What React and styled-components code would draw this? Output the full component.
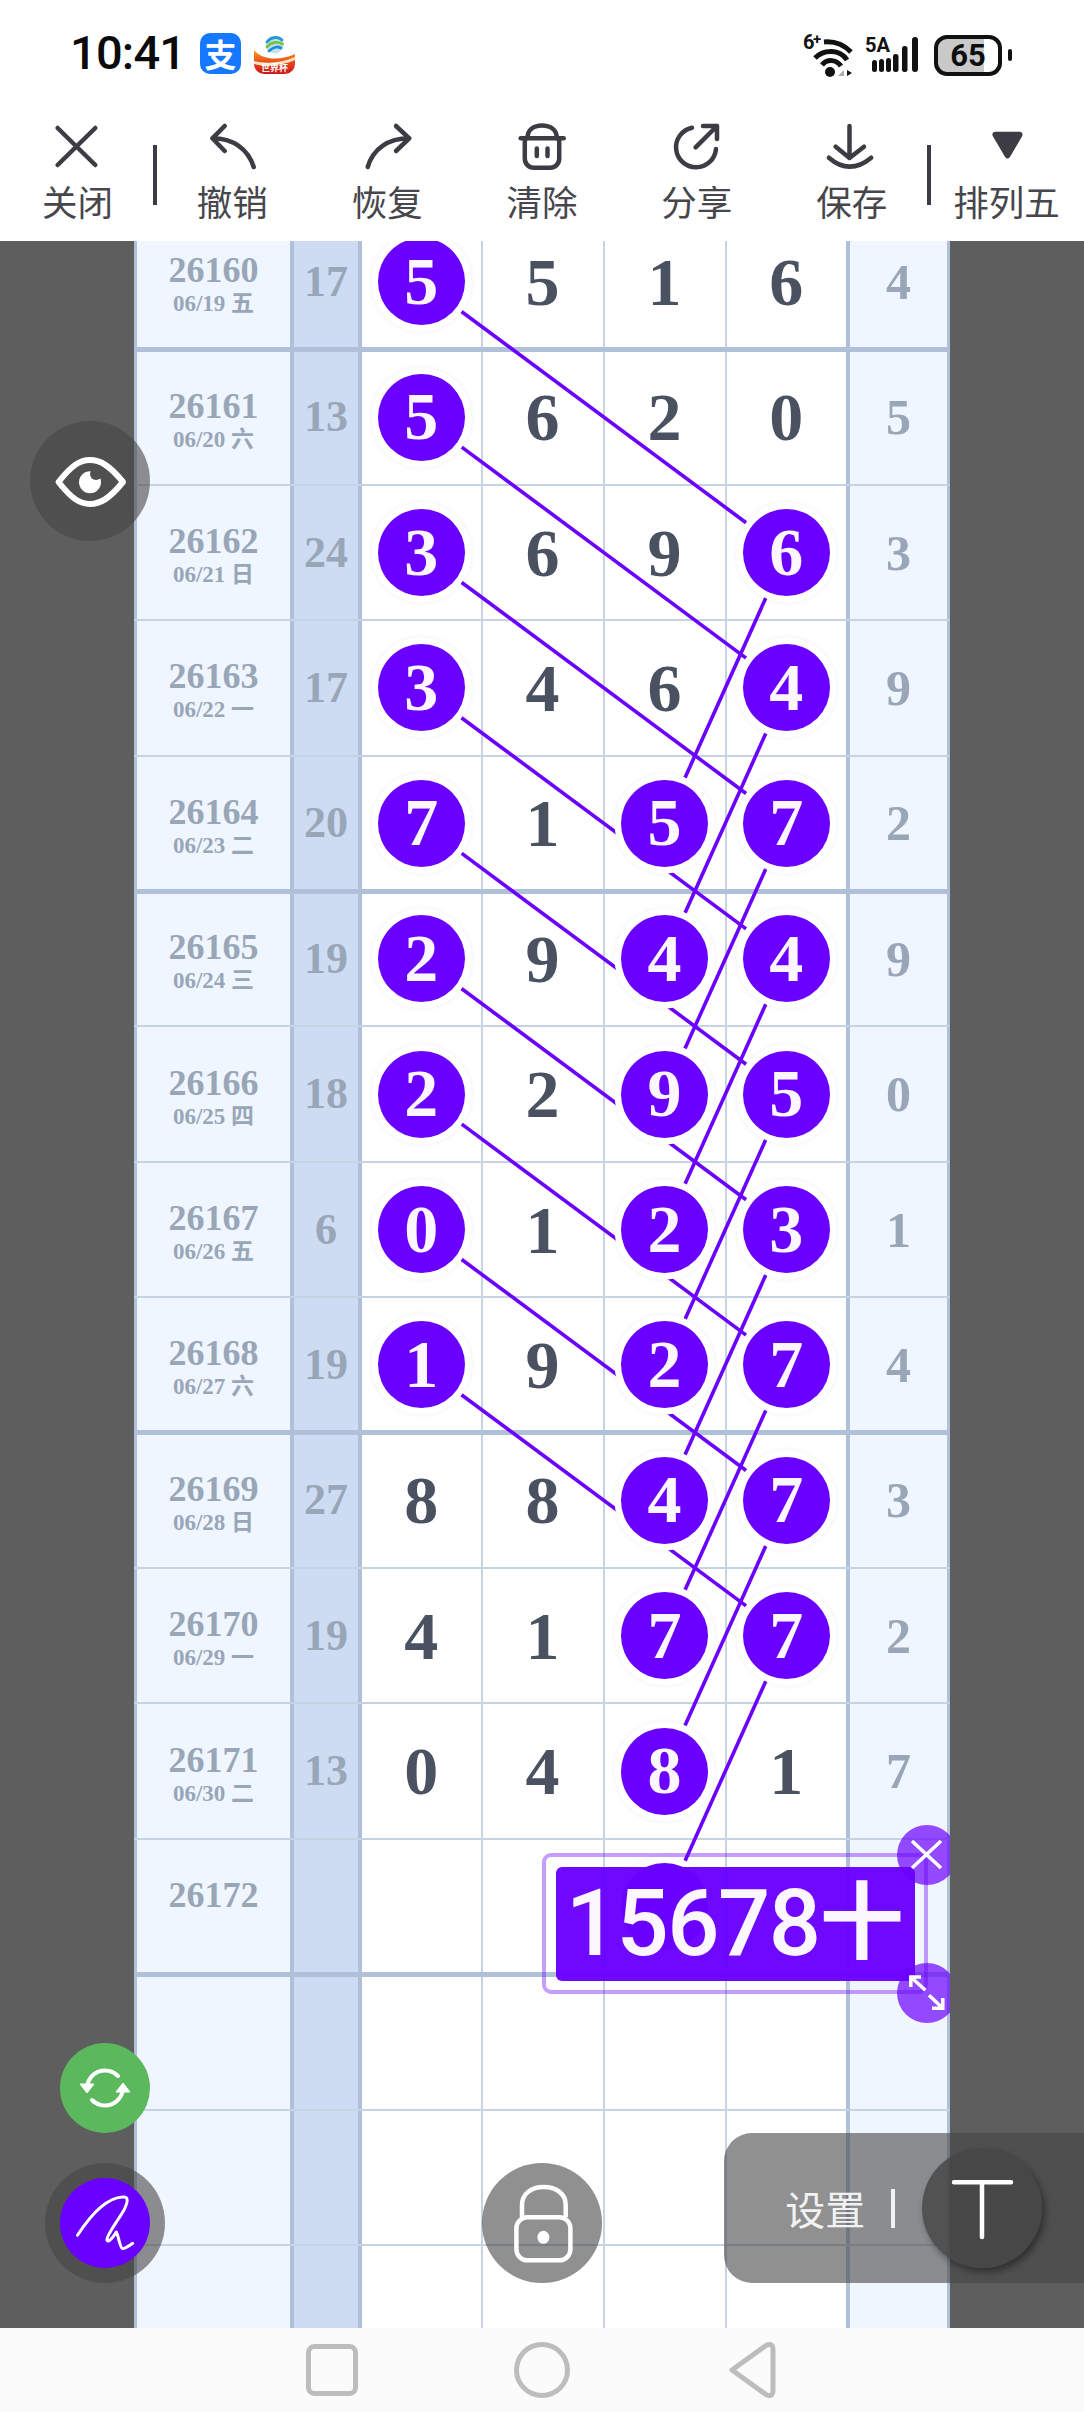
import React from "react";
import styled, { createGlobalStyle } from "styled-components";

const PURPLE = "#6a00ff";
const ROW_H = 135.4;
const CENTERS = [287.25, 408.5, 530.5, 652.25];

const rows = [
  { id: "26160", date: "06/19 五", sum: "17", d: [5, 5, 1, 6], on: [0], tail: "4" },
  { id: "26161", date: "06/20 六", sum: "13", d: [5, 6, 2, 0], on: [0], tail: "5" },
  { id: "26162", date: "06/21 日", sum: "24", d: [3, 6, 9, 6], on: [0, 3], tail: "3" },
  { id: "26163", date: "06/22 一", sum: "17", d: [3, 4, 6, 4], on: [0, 3], tail: "9" },
  { id: "26164", date: "06/23 二", sum: "20", d: [7, 1, 5, 7], on: [0, 2, 3], tail: "2" },
  { id: "26165", date: "06/24 三", sum: "19", d: [2, 9, 4, 4], on: [0, 2, 3], tail: "9" },
  { id: "26166", date: "06/25 四", sum: "18", d: [2, 2, 9, 5], on: [0, 2, 3], tail: "0" },
  { id: "26167", date: "06/26 五", sum: "6", d: [0, 1, 2, 3], on: [0, 2, 3], tail: "1" },
  { id: "26168", date: "06/27 六", sum: "19", d: [1, 9, 2, 7], on: [0, 2, 3], tail: "4" },
  { id: "26169", date: "06/28 日", sum: "27", d: [8, 8, 4, 7], on: [2, 3], tail: "3" },
  { id: "26170", date: "06/29 一", sum: "19", d: [4, 1, 7, 7], on: [2, 3], tail: "2" },
  { id: "26171", date: "06/30 二", sum: "13", d: [0, 4, 8, 1], on: [2], tail: "7" },
  { id: "26172", date: "\u00a0", sum: "", d: ["", "", "", ""], on: [2], tail: "" },
  { id: "", date: "", sum: "", d: ["", "", "", ""], on: [], tail: "" },
  { id: "", date: "", sum: "", d: ["", "", "", ""], on: [], tail: "" },
  { id: "", date: "", sum: "", d: ["", "", "", ""], on: [], tail: "" },
];

const thickAfter = new Set([0, 4, 8, 12]);

// [fromRow, fromCol, toRow, toCol]; the balls sit above the lines
const links = [
  ...[0, 1, 2, 3, 4, 5, 6, 7, 8].map((i) => [i, 0, i + 2, 3]),
  ...[2, 3, 4, 5, 6, 7, 8, 9, 10].map((i) => [i, 3, i + 2, 2]),
];

const segment = ([r1, c1, r2, c2]) => {
  const x1 = CENTERS[c1], y1 = (r1 + 0.5) * ROW_H;
  const x2 = CENTERS[c2], y2 = (r2 + 0.5) * ROW_H;
  const len = Math.hypot(x2 - x1, y2 - y1);
  const ux = (x2 - x1) / len, uy = (y2 - y1) / len;
  return { x1: x1 + ux * 50, y1: y1 + uy * 50, x2: x2 - ux * 50, y2: y2 - uy * 50 };
};

const Global = createGlobalStyle`
  html, body { margin: 0; padding: 0; background: #5e5e5e; }
  * { box-sizing: border-box; }
`;

const Page = styled.div`
  width: 1084px;
  height: 2412px;
  display: flex;
  flex-direction: column;
  overflow: hidden;
  font-family: "Noto Sans CJK SC", "Noto Sans", sans-serif;
`;

const StatusBar = styled.header`
  height: 106px;
  flex: none;
  background: #fff;
  display: flex;
  justify-content: space-between;
  align-items: flex-start;
  padding: 33px 72px 0 70px;
`;

const StatusLeft = styled.div`
  display: flex;
  align-items: flex-start;
`;

const Clock = styled.span`
  font: 500 47px/54px Roboto, sans-serif;
  letter-spacing: -0.8px;
  color: #0a0a0a;
  width: 130px;
  margin-top: -7px;
`;

const AppTile = styled.span`
  width: 41px;
  height: 41px;
  border-radius: 10px;
  overflow: ${(p) => (p.$clip ? "hidden" : "visible")};
  display: flex;
  align-items: center;
  justify-content: center;
  margin-right: 13px;
  background: ${(p) => p.$bg || "#fff"};
  color: #fff;
  font: 700 32px/41px "Noto Sans CJK SC", sans-serif;
`;

const StatusRight = styled.div`
  display: flex;
  align-items: flex-start;
  gap: 10px;
`;

const Battery = styled.div`
  position: relative;
  width: 68px;
  height: 41px;
  margin: 2px 10px 0 3px;
  border: 4px solid #111;
  border-radius: 13px;
  background: linear-gradient(90deg, #c9c9c9 0 46px, #fff 46px);
  display: flex;
  align-items: center;
  justify-content: center;
  font: 700 31px/33px Roboto, sans-serif;
  color: #0d0d0d;
  &::after {
    content: "";
    position: absolute;
    right: -14px;
    top: 10px;
    width: 4px;
    height: 12px;
    border-radius: 2px;
    background: #111;
  }
`;

const Toolbar = styled.nav`
  height: 135px;
  flex: none;
  background: #fff;
  display: flex;
`;

const ToolItem = styled.div`
  position: relative;
  flex: 1 1 0;
  display: flex;
  flex-direction: column;
  align-items: center;
  padding-top: 18px;
  color: #46464c;
  ${(p) =>
    p.$divided &&
    `&::after {
      content: "";
      position: absolute;
      right: -2px;
      top: 39px;
      width: 4px;
      height: 60px;
      background: #3c3c44;
    }`}
`;

const ToolLabel = styled.span`
  font-size: 35.5px;
  line-height: 44px;
  margin-top: 7px;
  white-space: nowrap;
`;

const Stage = styled.main`
  position: relative;
  flex: 1;
  min-height: 0;
  background: #5e5e5e;
  padding-left: 134px;
`;

const Sheet = styled.section`
  position: relative;
  width: 816px;
  height: 100%;
  overflow: hidden;
  background: #fff;
`;

const Rows = styled.div`
  position: relative;
  margin-top: -26.9px;
`;

const Row = styled.div`
  position: relative;
  height: ${ROW_H}px;
  display: grid;
  grid-template-columns: 160px 68px 120.5px 122px 122px 119.5px 104px;
  &::after {
    content: "";
    position: absolute;
    left: 0;
    right: 0;
    bottom: ${(p) => (p.$thick ? "-2.5px" : "-1px")};
    height: ${(p) => (p.$thick ? "5px" : "2px")};
    background: ${(p) => (p.$thick ? "#b0c0d8" : "#c6d3e3")};
    z-index: 1;
  }
`;

const IssueCell = styled.div`
  background: #f0f6ff;
  border-left: 3px solid #b0c0d8;
  border-right: 4px solid #b0c0d8;
  display: flex;
  flex-direction: column;
  align-items: center;
  justify-content: center;
  padding-top: 5px;
  color: #98a6b8;
  font-family: "Liberation Serif", "Noto Sans CJK SC", serif;
  font-weight: 700;
`;

const IssueNo = styled.span`
  font-size: 36px;
  line-height: 40px;
`;

const IssueDate = styled.span`
  font-size: 23px;
  line-height: 28px;
  white-space: pre;
`;

const SumCell = styled.div`
  background: #cddcf3;
  border-right: 4px solid #b0c0d8;
  display: flex;
  align-items: center;
  justify-content: center;
  color: #98a6b8;
  font: 700 44px/1 "Liberation Serif", serif;
`;

const DigitCell = styled.div`
  border-right: ${(p) => (p.$last ? "none" : "2px solid #c6d3e3")};
  display: flex;
  align-items: center;
  justify-content: center;
  color: #4a5160;
  font: 700 68px/1 "Liberation Serif", serif;
`;

const Ball = styled.span`
  position: relative;
  z-index: 2;
  width: 87px;
  height: 87px;
  padding-bottom: 2px;
  border-radius: 50%;
  background: ${PURPLE};
  color: #fbf6ff;
  display: flex;
  align-items: center;
  justify-content: center;
  box-shadow: 0 0 0 6.5px #fff, 0 0 4px 8px rgba(0, 0, 0, 0.04);
`;

const TailCell = styled.div`
  background: #f0f6ff;
  border-left: 4px solid #b0c0d8;
  border-right: 3px solid #b0c0d8;
  display: flex;
  align-items: center;
  justify-content: center;
  color: #98a6b8;
  font: 700 50px/1 "Liberation Serif", serif;
`;

const LinkLayer = styled.svg`
  position: absolute;
  left: 0;
  top: 0;
  width: 816px;
  height: 2200px;
  z-index: 1;
  pointer-events: none;
`;

const SelectBox = styled.div`
  position: absolute;
  z-index: 4;
  left: 407.7px;
  top: 1612px;
  width: 386px;
  height: 141px;
  padding: 10px;
  border: 4px solid rgba(106, 0, 255, 0.38);
  border-radius: 9px;
`;

const TextTag = styled.div`
  width: 359px;
  height: 114px;
  padding-left: 10px;
  border-radius: 6px;
  background: rgba(105, 0, 255, 0.97);
  color: #fbf6ff;
  display: flex;
  align-items: center;
  font: 500 92px/114px Roboto, "Noto Sans CJK SC", sans-serif;
  letter-spacing: -1.5px;
  white-space: nowrap;
`;

const TagPlus = styled.span`
  font-size: 84px;
  font-weight: 700;
  margin-left: 0;
  letter-spacing: 0;
`;

const TagHandle = styled.span`
  position: absolute;
  right: -33px;
  ${(p) => (p.$bottom ? "bottom: -32.7px;" : "top: -32px;")}
  width: 60px;
  height: 60px;
  border-radius: 50%;
  background: rgba(106, 0, 255, 0.7);
  display: block;
`;

const FloatRound = styled.button`
  position: absolute;
  z-index: 6;
  left: ${(p) => p.$x - p.$size / 2}px;
  top: ${(p) => p.$y - 241 - p.$size / 2}px;
  width: ${(p) => p.$size}px;
  height: ${(p) => p.$size}px;
  padding: 0;
  border: none;
  border-radius: 50%;
  background: ${(p) => p.$bg || "rgba(70, 70, 70, 0.6)"};
  display: flex;
  align-items: center;
  justify-content: center;
`;

const PenDisc = styled.span`
  width: 90px;
  height: 90px;
  border-radius: 50%;
  background: ${PURPLE};
  display: block;
`;

const Icon = styled.svg`
  display: block;
  flex: none;
  overflow: visible;
`;

const SettingsPill = styled.div`
  position: absolute;
  z-index: 5;
  left: 724.3px;
  right: 0;
  top: 1892px;
  height: 150px;
  border-radius: 28px 0 0 28px;
  background: rgba(70, 70, 70, 0.6);
  display: flex;
  align-items: center;
  padding-left: 61px;
  color: #f2f2f2;
  font-size: 40px;
  line-height: 48px;
`;

const PillBar = styled.span`
  width: 4px;
  height: 39px;
  margin-left: 26px;
  background: #f2f2f2;
`;

const TextButton = styled.span`
  position: absolute;
  left: 197.7px;
  top: 15px;
  width: 120px;
  height: 120px;
  border-radius: 50%;
  background: rgba(70, 70, 70, 0.82);
  box-shadow: 3px 4px 7px rgba(0, 0, 0, 0.4);
  display: flex;
  align-items: center;
  justify-content: center;
`;

const NavBar = styled.footer`
  height: 84px;
  flex: none;
  background: #fbfbfb;
  display: flex;
  justify-content: center;
  align-items: center;
`;

const NavSlot = styled.span`
  width: 210px;
  display: flex;
  justify-content: center;
`;

const S = { fill: "none", stroke: "#3c3c44", strokeWidth: 4.5, strokeLinecap: "round", strokeLinejoin: "round" };

const toolIcons = {
  close: <path d="M10.6 4 48.3 41M48.3 4 10.6 41" {...S} />,
  undo: <path d="M22.7 2 10.4 14.3 22.7 27M10.4 14.3C31 14.3 46 25 51.7 43" {...S} />,
  redo: <path d="M39 2 52.3 14.3 39 27M52.3 14.3C31 14.3 16 25 10.7 43" {...S} />,
  clear: (
    <g {...S}>
      <path d="M8.7 14.3H51.7" />
      <path d="M15.5 14.3C15.5 5.5 22 1.5 30 1.5S44.8 5.5 44.8 14.3" />
      <path d="M12.8 14.3V34.7a9 9 0 0 0 9 9H38.2a9 9 0 0 0 9-9V14.3" />
      <path d="M24.8 24.5V32M35.5 24.5V32" />
    </g>
  ),
  share: (
    <g {...S}>
      <path d="M25 3.7A20 20 0 1 0 49 25" />
      <path d="M28.6 23.3 50 2M36 2H50V15" />
    </g>
  ),
  save: (
    <g {...S}>
      <path d="M27.5 2V34M13.7 22.7 27.5 34 42 22.7" />
      <path d="M6.9 33.7Q27.5 51.7 49.2 33.7" />
    </g>
  ),
  draw: <path d="M18.5 10.7H42.5L30.5 31.3Z" fill="#3c3c44" stroke="#3c3c44" strokeWidth="6" strokeLinejoin="round" />,
};

const tools = [
  ["close", "关闭", true],
  ["undo", "撤销"],
  ["redo", "恢复"],
  ["clear", "清除"],
  ["share", "分享"],
  ["save", "保存", true],
  ["draw", "排列五"],
];

const WifiGlyph = () => (
  <Icon width="52" height="46" viewBox="0 0 52 46">
    <text x="0" y="16" fontFamily="Roboto, sans-serif" fontWeight="700" fontSize="20" fill="#111">6</text>
    <text x="10" y="11" fontFamily="Roboto, sans-serif" fontWeight="700" fontSize="15" fill="#111">+</text>
    <g fill="none" stroke="#111" strokeWidth="5">
      <path d="M21 9C32 8 41 12 48 19" />
      <path d="M12 25C21 16 37 16 44 27" />
      <path d="M19 32C24 26 33 26 38 33" />
    </g>
    <circle cx="27" cy="39" r="5" fill="#111" />
    <path d="M35 43 41 37V43Z" fill="#aaa" />
    <path d="M44 37 49 40 44 43Z" fill="#111" />
  </Icon>
);

const SignalGlyph = () => (
  <Icon width="56" height="46" viewBox="0 0 56 46">
    <text x="0" y="19" fontFamily="Roboto, sans-serif" fontWeight="700" fontSize="21" fill="#111" textLength="25" lengthAdjust="spacingAndGlyphs">5A</text>
    <g fill="#111">
      <rect x="7" y="27" width="5" height="12" rx="2.5" />
      <rect x="14" y="26" width="5" height="13" rx="2.5" />
      <rect x="21" y="25" width="5" height="14" rx="2.5" />
      <rect x="28" y="21" width="5.5" height="18" rx="2.5" />
      <rect x="37" y="13" width="5.5" height="26" rx="2.5" />
      <rect x="47" y="4" width="6" height="35" rx="3" />
    </g>
  </Icon>
);

const MiguIcon = () => (
  <Icon width="41" height="41" viewBox="0 0 41 41">
    <defs>
      <linearGradient id="migu" x1="0" y1="0" x2="0" y2="1">
        <stop offset="0" stopColor="#f6a31f" />
        <stop offset="0.55" stopColor="#e8431c" />
        <stop offset="1" stopColor="#c9151b" />
      </linearGradient>
    </defs>
    <rect width="41" height="41" fill="#fff" />
    <path d="M0 17C8 27 26 28 41 21V41H0Z" fill="url(#migu)" />
    <path d="M0 28C12 31 28 30 41 24V27C28 33 12 34 0 31Z" fill="#fde3c0" />
    <circle cx="20.5" cy="11.5" r="9" fill="#bfe3f2" />
    <g fill="none" strokeWidth="2.8" strokeLinecap="round">
      <path d="M13 9C17 4 24 3 28 7" stroke="#1d9ad6" />
      <path d="M13 14C17 9 24 8 28.5 11" stroke="#79c143" />
      <path d="M15 18C19 14 24 13 27 15" stroke="#1d8fcf" />
    </g>
    <text x="20.5" y="38" textAnchor="middle" fontFamily="'Noto Sans CJK SC', sans-serif" fontWeight="700" fontSize="9" fill="#fff">世界杯</text>
  </Icon>
);

export default function App() {
  return (
    <Page>
      <Global />
      <StatusBar>
        <StatusLeft>
          <Clock>10:41</Clock>
          <AppTile $bg="#1677ff">支</AppTile>
          <AppTile $clip><MiguIcon /></AppTile>
        </StatusLeft>
        <StatusRight>
          <WifiGlyph />
          <SignalGlyph />
          <Battery>65</Battery>
        </StatusRight>
      </StatusBar>

      <Toolbar>
        {tools.map(([key, label, divided]) => (
          <ToolItem key={key} $divided={divided}>
            <Icon width="60" height="48" viewBox="0 0 60 48">
              {toolIcons[key]}
            </Icon>
            <ToolLabel>{label}</ToolLabel>
          </ToolItem>
        ))}
      </Toolbar>

      <Stage>
        <Sheet>
          <Rows>
            {rows.map((r, i) => (
              <Row key={i} $thick={thickAfter.has(i)}>
                <IssueCell>
                  {r.id && <IssueNo>{r.id}</IssueNo>}
                  {r.date && <IssueDate>{r.date}</IssueDate>}
                </IssueCell>
                <SumCell>{r.sum}</SumCell>
                {r.d.map((v, c) => (
                  <DigitCell key={c} $last={c === 3}>
                    {r.on.includes(c) ? <Ball>{v}</Ball> : v}
                  </DigitCell>
                ))}
                <TailCell>{r.tail}</TailCell>
              </Row>
            ))}
            <LinkLayer viewBox="0 0 816 2200">
              {links.map((l, i) => {
                const s = segment(l);
                return <line key={i} {...s} stroke={PURPLE} strokeWidth="3.6" />;
              })}
            </LinkLayer>
          </Rows>
          <SelectBox>
            <TextTag>15678<TagPlus>十</TagPlus></TextTag>
            <TagHandle>
              <Icon width="60" height="60" viewBox="0 0 60 60">
                <path d="M15 16 44 43M44 16 15 43" stroke="#fff" strokeWidth="3.5" />
              </Icon>
            </TagHandle>
            <TagHandle $bottom>
              <Icon width="60" height="60" viewBox="0 0 60 60">
                <path d="M13.8 14 28.4 27.3M13.8 24V14H24M32 32.3 45.8 45.3M45.8 35V45.3H35" fill="none" stroke="#fff" strokeWidth="3.5" />
              </Icon>
            </TagHandle>
          </SelectBox>
        </Sheet>

        <FloatRound $x={90} $y={480.7} $size={120} aria-label="eye">
          <Icon width="120" height="120" viewBox="0 0 120 120">
            <path d="M28.5 61C42 44 50 39 60 39S79 44 93 61C79 78 70 83 60 83S42 78 28.5 61Z" fill="none" stroke="#fff" strokeWidth="6" strokeLinejoin="round" />
            <circle cx="60" cy="61.3" r="11" fill="#fff" />
            <circle cx="66" cy="53" r="6" fill="#505050" />
          </Icon>
        </FloatRound>

        <FloatRound $x={105} $y={2087.7} $size={90} $bg="#5cb85c" aria-label="sync">
          <Icon width="60" height="60" viewBox="0 0 60 60">
            <path d="M12 30A18 18 0 0 1 43 18M48 30A18 18 0 0 1 17 42" fill="none" stroke="#fff" strokeWidth="4" strokeLinecap="round" />
            <path d="M5 26H19L12 35ZM41 34H55L48 25Z" fill="#fff" stroke="#fff" strokeWidth="1" strokeLinejoin="round" />
          </Icon>
        </FloatRound>

        <FloatRound $x={105} $y={2222.7} $size={120} aria-label="pen">
          <PenDisc>
            <Icon width="90" height="90" viewBox="0 0 90 90">
              <path d="M17.5 57.3C30 38 45 20 62.4 19C69 18 68 24 64 32C57 44 46 58 47 62C48 66 54 58 56.3 54C58 56 60 70 62.4 70.6C65 71 69 68 72.7 65.3" fill="none" stroke="#fff" strokeWidth="3" strokeLinecap="round" strokeLinejoin="round" />
            </Icon>
          </PenDisc>
        </FloatRound>

        <FloatRound $x={541.6} $y={2222.7} $size={120} aria-label="lock">
          <Icon width="120" height="120" viewBox="0 0 120 120">
            <rect x="34.4" y="54.3" width="54" height="43" rx="11" fill="none" stroke="#fff" strokeWidth="4.5" />
            <path d="M40 54V42C40 31 49 24 61.8 24S83.7 31 83.7 42V54" fill="none" stroke="#fff" strokeWidth="4.5" />
            <ellipse cx="61.4" cy="74.3" rx="6" ry="6.5" fill="#fff" />
          </Icon>
        </FloatRound>

        <SettingsPill>
          设置
          <PillBar />
          <TextButton>
            <Icon width="120" height="120" viewBox="0 0 120 120">
              <path d="M32 34.3H89M60 34.3V89" fill="none" stroke="#fff" strokeWidth="4.5" strokeLinecap="round" />
            </Icon>
          </TextButton>
        </SettingsPill>
      </Stage>

      <NavBar>
        <NavSlot>
          <Icon width="54" height="54" viewBox="0 0 54 54">
            <rect x="3.5" y="3.5" width="47" height="47" rx="6" fill="none" stroke="#bdbdbd" strokeWidth="5" />
          </Icon>
        </NavSlot>
        <NavSlot>
          <Icon width="58" height="58" viewBox="0 0 58 58">
            <circle cx="29" cy="29" r="25.5" fill="none" stroke="#bdbdbd" strokeWidth="5" />
          </Icon>
        </NavSlot>
        <NavSlot>
          <Icon width="50" height="60" viewBox="0 0 50 60">
            <path d="M5 30 39 5.5Q46 2 46 10V50Q46 58 39 54.5Z" fill="none" stroke="#bdbdbd" strokeWidth="5" strokeLinejoin="round" />
          </Icon>
        </NavSlot>
      </NavBar>
    </Page>
  );
}
